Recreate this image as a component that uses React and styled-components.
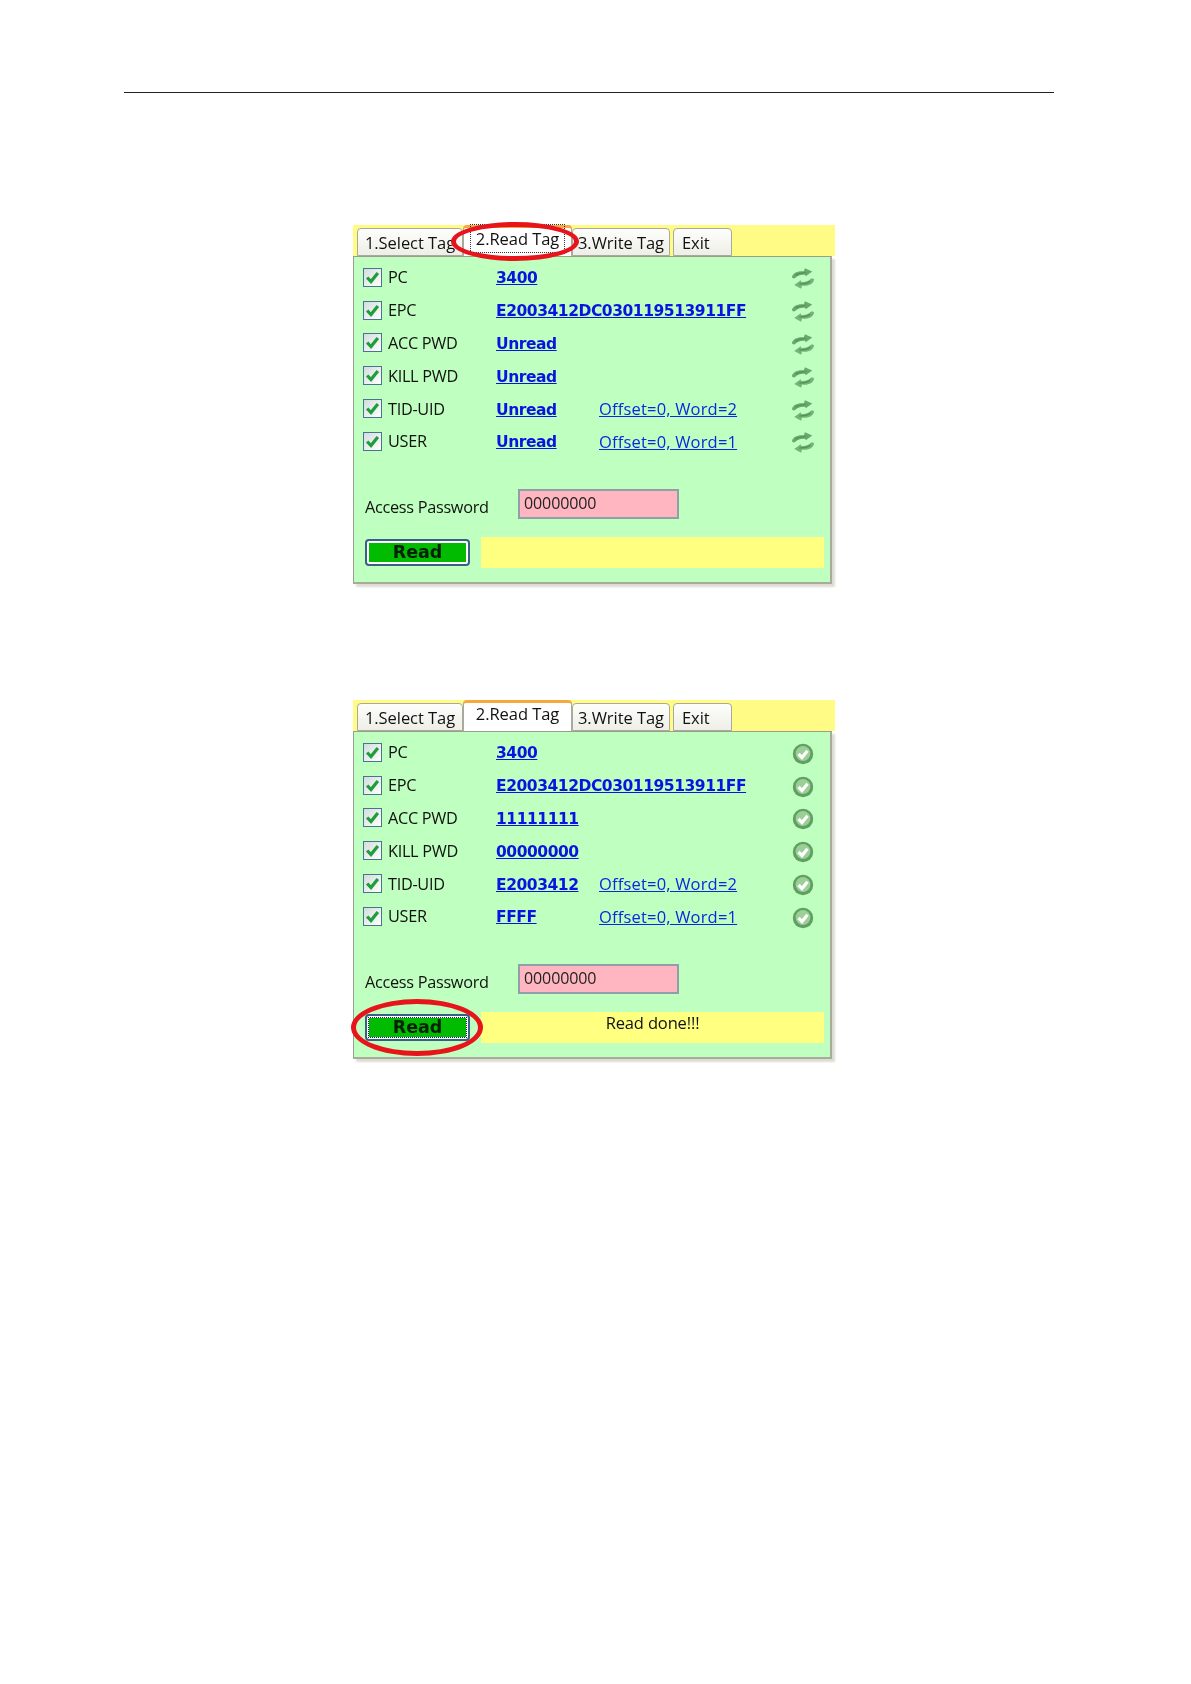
import React from "react";
import styled, { createGlobalStyle } from "styled-components";

const GlobalStyle = createGlobalStyle`
  html, body {
    margin: 0;
    background: #fff;
  }
`;

const Page = styled.div`
  width: 1191px;
  height: 1684px;
  box-sizing: border-box;
  padding-top: 92px;
  font-family: "Open Sans", "Noto Sans", sans-serif;
  overflow: hidden;
`;

const Rule = styled.div`
  height: 1px;
  margin: 0 137px 0 124px;
  background: #222;
`;

const Shots = styled.div`
  display: flex;
  flex-direction: column;
  gap: 116px;
  margin: 132px 0 0 353px;
`;

const Shot = styled.div`
  position: relative;
  width: 482px;
`;

const Blurred = styled.div`
  filter: blur(0.4px);
`;

const TabStrip = styled.div`
  height: 31px;
  box-sizing: border-box;
  padding: 3px 0 0 4px;
  background: #fffb85;
  display: flex;
  align-items: flex-end;
`;

const Tab = styled.div`
  box-sizing: border-box;
  width: ${(p) => p.$w}px;
  margin-right: ${(p) => p.$gap || 0}px;
  height: ${(p) => (p.$active ? 31 : 28)}px;
  margin-top: ${(p) => (p.$active ? -3 : 0)}px;
  padding-left: ${(p) => p.$pad || 0}px;
  position: relative;
  border: 1px solid #a9a99c;
  border-bottom: ${(p) => (p.$active ? "none" : "1px solid #a9a99c")};
  border-top: ${(p) => (p.$active ? "3px solid #f6a93c" : "1px solid #a9a99c")};
  border-radius: 4px 4px 0 0;
  background: ${(p) =>
    p.$active ? "#fff" : "linear-gradient(#fdfdfb, #efefe8)"};
  color: #111;
  font-size: 16.5px;
  letter-spacing: -0.05px;
  line-height: ${(p) => (p.$active ? 22 : 27)}px;
  text-align: ${(p) => (p.$pad ? "left" : "center")};
  white-space: nowrap;
  z-index: ${(p) => (p.$active ? 1 : 0)};
`;

const FocusText = styled.span`
  outline: ${(p) => (p.$focus ? "1px dotted #333" : "none")};
  outline-offset: 2px;
  padding: 0 3px;
`;

const Panel = styled.div`
  box-sizing: border-box;
  width: 479px;
  height: 328px;
  background: #bfffbf;
  border: 1px solid #9c9c90;
  border-right: 2px solid #a9a99c;
  border-bottom: 2px solid #a9a99c;
  box-shadow: 3px 3px 2px #dcdcd4;
  padding: 4px 6px 0 9px;
`;

const Rows = styled.div`
  display: grid;
  grid-auto-rows: 32.8px;
`;

const Row = styled.div`
  display: grid;
  grid-template-columns: 25px 108px 103px 1fr 34px;
  align-items: center;
`;

const Check = styled.div`
  width: 19px;
  height: 19px;
  box-sizing: border-box;
  border: 1.5px solid #47758f;
  background: linear-gradient(135deg, #d3dcdc, #fff);
  display: flex;
  align-items: center;
  justify-content: center;
`;

const Label = styled.span`
  font-size: 16.3px;
  letter-spacing: -0.3px;
  color: #111;
  white-space: nowrap;
`;

const Value = styled.a`
  grid-column: ${(p) => (p.$wide ? "3 / 5" : "auto")};
  padding-top: 2px;
  font-family: "DejaVu Sans", sans-serif;
  font-size: 15.5px;
  font-weight: 700;
  letter-spacing: -0.45px;
  color: #0a14e0;
  text-decoration: underline;
  white-space: nowrap;
`;

const Offset = styled.a`
  font-size: 16.5px;
  letter-spacing: 0.18px;
  color: #0a28e0;
  text-decoration: underline;
  white-space: nowrap;
`;

const IconCell = styled.div`
  display: flex;
  justify-content: center;
  padding: 3px 8px 0 0;
`;

const PasswordRow = styled.div`
  display: flex;
  align-items: center;
  margin: 31px 0 0 2px;
`;

const PasswordLabel = styled(Label)`
  width: 153px;
  padding-top: 6px;
`;

const PasswordInput = styled.div`
  box-sizing: border-box;
  width: 161px;
  height: 30px;
  padding-left: 4px;
  background: #ffb6c1;
  border: 2px solid #8fa0a8;
  font-size: 16px;
  letter-spacing: -0.1px;
  line-height: 24px;
  color: #222;
`;

const ActionRow = styled.div`
  display: flex;
  align-items: center;
  gap: 11px;
  margin: 18px 0 0 2px;
`;

const ReadButton = styled.div`
  box-sizing: border-box;
  width: 105px;
  height: 27px;
  border: 2px solid #3a5f85;
  border-radius: 4px;
  background: #fff;
  padding: 2px;
  display: flex;
`;

const ReadFace = styled.div`
  flex: 1;
  background: #00bb00;
  outline: ${(p) => (p.$focus ? "1.5px dotted #1a1a6a" : "none")};
  font-family: "DejaVu Sans", sans-serif;
  font-weight: 700;
  font-size: 17.5px;
  line-height: 19px;
  text-align: center;
  color: #062006;
`;

const Status = styled.div`
  width: 343px;
  height: 31px;
  background: #ffff80;
  font-size: 16.5px;
  letter-spacing: -0.15px;
  line-height: 21px;
  text-align: center;
  color: #111;
`;

const RedOval = styled.div`
  position: absolute;
  box-sizing: border-box;
  left: ${(p) => p.$x}px;
  top: ${(p) => p.$y}px;
  width: ${(p) => p.$w}px;
  height: ${(p) => p.$h}px;
  border: 5px solid #e8141c;
  border-radius: 50%;
  z-index: 3;
`;

const Tick = () => (
  <svg width="15" height="15" viewBox="0 0 14 14">
    <path d="M2 7 L5.6 10.8 L12 2.8" fill="none" stroke="#1f9d3a" strokeWidth="3" />
  </svg>
);

const SyncIcon = () => (
  <svg width="24" height="23" viewBox="0 0 26 24">
    <path d="M1 10.5 C2 6 7 3.5 14 4.2 L15 1 L23 4.5 L16 9.5 L15.2 8 C10 7.5 6.5 9.5 4.5 11.5 C3 12.3 1.5 11.8 1 10.5 Z" fill="#69a86d" />
    <path d="M25 13 C24 18 19 20.5 12 19.6 L11 23 L3.5 19 L10.5 14 L11.2 15.8 C16 16.2 19.5 14.5 21.5 12.4 C23 11.5 24.5 11.8 25 13 Z" fill="#77b379" />
    <path d="M5 8.5 C8 6 11 5.5 16 5.8" fill="none" stroke="#4f8d55" strokeWidth="1.2" />
    <path d="M9 18 C13 18 17 18 21 15" fill="none" stroke="#4f8d55" strokeWidth="1.2" />
  </svg>
);

const DoneIcon = () => (
  <svg width="22" height="22" viewBox="0 0 22 22">
    <circle cx="11" cy="11" r="10.2" fill="#5f9f62" />
    <circle cx="11" cy="10.5" r="7.4" fill="#9ccf97" />
    <path d="M6.5 11 L10 14.5 L15.5 7.8" fill="none" stroke="#fff" strokeWidth="3.2" />
  </svg>
);

const rowsBefore = [
  { label: "PC", value: "3400" },
  { label: "EPC", value: "E2003412DC030119513911FF", wide: true },
  { label: "ACC PWD", value: "Unread" },
  { label: "KILL PWD", value: "Unread" },
  { label: "TID-UID", value: "Unread", offset: "Offset=0, Word=2" },
  { label: "USER", value: "Unread", offset: "Offset=0, Word=1" },
];

const rowsAfter = [
  { label: "PC", value: "3400" },
  { label: "EPC", value: "E2003412DC030119513911FF", wide: true },
  { label: "ACC PWD", value: "11111111" },
  { label: "KILL PWD", value: "00000000" },
  { label: "TID-UID", value: "E2003412", offset: "Offset=0, Word=2" },
  { label: "USER", value: "FFFF", offset: "Offset=0, Word=1" },
];

const ReaderShot = ({ rows, done, children }) => (
  <Shot>
    <Blurred>
      <TabStrip>
        <Tab $w={106}>1.Select Tag</Tab>
        <Tab $w={109} $active>
          <FocusText $focus={!done}>2.Read Tag</FocusText>
        </Tab>
        <Tab $w={98} $gap={3}>3.Write Tag</Tab>
        <Tab $w={59} $pad={8}>Exit</Tab>
      </TabStrip>
      <Panel>
        <Rows>
          {rows.map((r) => (
            <Row key={r.label}>
              <Check>
                <Tick />
              </Check>
              <Label>{r.label}</Label>
              <Value $wide={r.wide}>{r.value}</Value>
              {r.wide ? null : r.offset ? <Offset>{r.offset}</Offset> : <span />}
              <IconCell>{done ? <DoneIcon /> : <SyncIcon />}</IconCell>
            </Row>
          ))}
        </Rows>
        <PasswordRow>
          <PasswordLabel>Access Password</PasswordLabel>
          <PasswordInput>00000000</PasswordInput>
        </PasswordRow>
        <ActionRow>
          <ReadButton>
            <ReadFace $focus={done}>Read</ReadFace>
          </ReadButton>
          <Status>{done ? "Read done!!!" : ""}</Status>
        </ActionRow>
      </Panel>
    </Blurred>
    {children}
  </Shot>
);

export default function App() {
  return (
    <Page>
      <GlobalStyle />
      <Rule />
      <Shots>
        <ReaderShot rows={rowsBefore}>
          <RedOval $x={98} $y={-3} $w={128} $h={39} />
        </ReaderShot>
        <ReaderShot rows={rowsAfter} done>
          <RedOval $x={-2} $y={299} $w={132} $h={57} />
        </ReaderShot>
      </Shots>
    </Page>
  );
}
